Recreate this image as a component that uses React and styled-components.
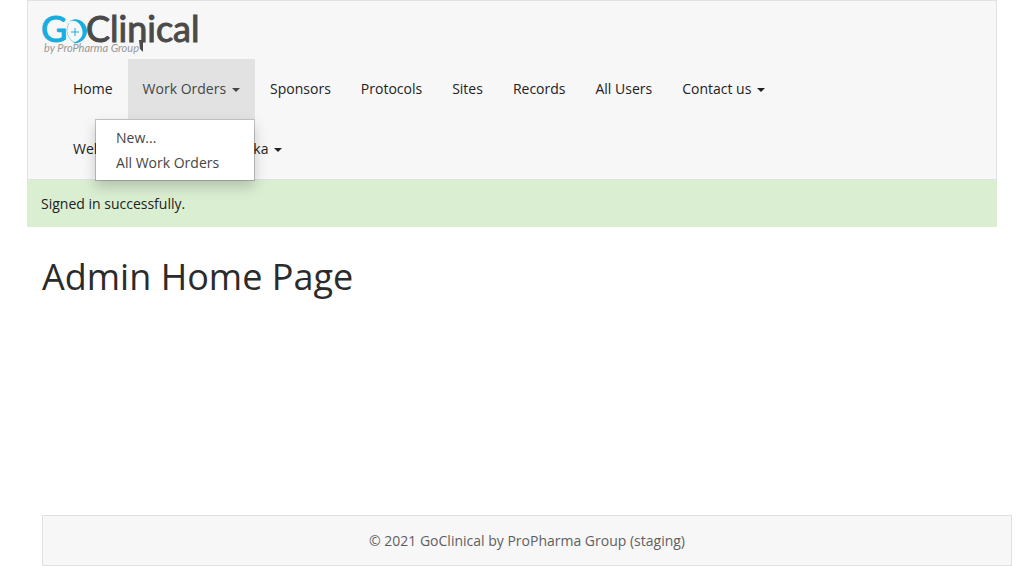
import React from "react";
import styled, { createGlobalStyle } from "styled-components";

const GlobalStyle = createGlobalStyle`
  *, *::before, *::after { box-sizing: border-box; }
  body {
    margin: 0;
    background: #fff;
    color: #222;
    font-family: "Open Sans", "Liberation Sans", sans-serif;
    font-size: 14px;
    line-height: 20px;
  }
`;

const Page = styled.div`
  display: flex;
  flex-direction: column;
  max-width: 970px;
  min-height: 100vh;
  margin: 0 auto;
`;

const Header = styled.header`
  background: #f7f7f7;
  border: 1px solid #e1e1e1;
`;

const Brand = styled.a`
  display: flex;
  width: max-content;
  height: 58px;
  padding: 4px 14px;
`;

const NavList = styled.ul`
  display: flex;
  flex-wrap: wrap;
  list-style: none;
  margin: 0;
  padding: 0 30px;
`;

const NavItem = styled.li`
  position: relative;
`;

const NavLink = styled.a`
  display: flex;
  align-items: center;
  gap: 6px;
  height: 60px;
  padding: 0 15px;
  white-space: nowrap;
  text-decoration: none;
  color: ${(p) => (p.$open ? "#454545" : "#222")};
  background: ${(p) => (p.$open ? "#e2e2e2" : "transparent")};
`;

const Caret = styled.span`
  border: 4px solid transparent;
  border-top-color: currentColor;
  border-bottom: 0;
  margin-top: 2px;
`;

const Menu = styled.ul`
  position: absolute;
  z-index: 10;
  top: 100%;
  right: 0;
  min-width: 160px;
  list-style: none;
  margin: 0;
  padding: 5px 0;
  background: #fff;
  background-clip: padding-box;
  border: 1px solid rgba(0, 0, 0, 0.2);
  box-shadow: 0 6px 12px rgba(0, 0, 0, 0.18);
`;

const MenuLink = styled.a`
  display: block;
  padding: 3px 20px;
  line-height: 19px;
  white-space: nowrap;
  text-decoration: none;
  color: #454545;
`;

const Notice = styled.div`
  padding: 14px;
  line-height: 19px;
  background: #daeed2;
`;

const Main = styled.main`
  padding: 30px 15px;
`;

const Title = styled.h1`
  margin: 0;
  font-size: 36px;
  font-weight: 400;
  line-height: 40px;
  color: #2b2b2b;
`;

const Footer = styled.footer`
  margin: auto -15px 0 15px;
  padding: 15px;
  line-height: 19px;
  text-align: center;
  color: #5f5f5f;
  background: #f7f7f7;
  border: 1px solid #e1e1e1;
`;

const Wordmark = styled.text`
  font-family: Lato, "Liberation Sans", sans-serif;
  font-size: 36px;
  fill: ${(p) => p.$tone};
  stroke: ${(p) => p.$tone};
  stroke-width: 1px;
`;

const Tagline = styled.text`
  font-family: Lato, "Open Sans", sans-serif;
  font-size: 11px;
  font-style: italic;
  fill: #999;
`;

function Logo() {
  return (
    <svg width="160" height="50" viewBox="0 0 160 50" role="img" aria-label="GoClinical by ProPharma Group">
      <Wordmark x="-1" y="37" $tone="#16aee0">G</Wordmark>
      <path d="M27 18 C23 25 25 35 34 38" fill="none" stroke="#8bd5ed" strokeWidth="1" />
      <path d="M27 17 C34 10 45 17 45 26 C45 34 38 39 31 38 C39 35 42 30 40 24 C38 17 32 14 27 17Z" fill="#16aee0" />
      <path d="M33 23v8M29 27h8" stroke="#16aee0" strokeWidth="1" />
      <Wordmark x="44" y="37" $tone="#4b4a49">Clinical</Wordmark>
      <path d="M97 35h4v12l-3-3z" fill="#4b4a49" />
      <Tagline x="2" y="47">by ProPharma Group</Tagline>
    </svg>
  );
}

const links = [
  { label: "Home" },
  { label: "Work Orders", menu: ["New...", "All Work Orders"] },
  { label: "Sponsors" },
  { label: "Protocols" },
  { label: "Sites" },
  { label: "Records" },
  { label: "All Users" },
  { label: "Contact us", caret: true },
  { label: "Welcome, Aleksandra Nilinska", caret: true },
];

export default function App() {
  return (
    <>
      <GlobalStyle />
      <Page>
        <Header>
          <Brand href="#">
            <Logo />
          </Brand>
          <nav>
            <NavList>
              {links.map(({ label, menu, caret }) => (
                <NavItem key={label}>
                  <NavLink href="#" $open={Boolean(menu)}>
                    {label}
                    {(menu || caret) && <Caret />}
                  </NavLink>
                  {menu && (
                    <Menu>
                      {menu.map((item) => (
                        <li key={item}>
                          <MenuLink href="#">{item}</MenuLink>
                        </li>
                      ))}
                    </Menu>
                  )}
                </NavItem>
              ))}
            </NavList>
          </nav>
        </Header>
        <Notice role="status">Signed in successfully.</Notice>
        <Main>
          <Title>Admin Home Page</Title>
        </Main>
        <Footer>© 2021 GoClinical by ProPharma Group (staging)</Footer>
      </Page>
    </>
  );
}
